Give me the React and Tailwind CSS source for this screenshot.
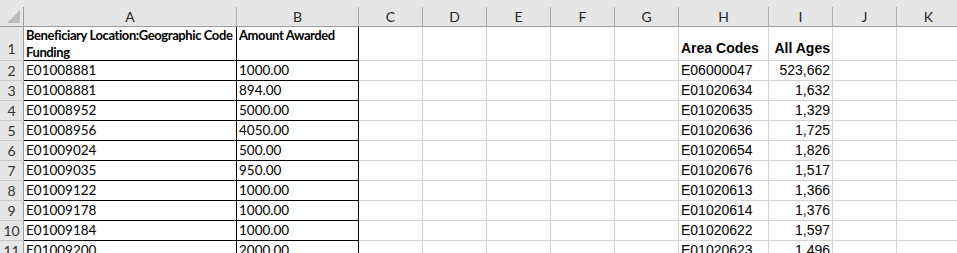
import React from "react";

const cols = ["A", "B", "C", "D", "E", "F", "G", "H", "I", "J", "K"];
const widths = ["w-[213px]", "w-[122px]", "w-[64px]", "w-[64px]", "w-[64px]", "w-[64px]", "w-[64px]", "w-[90px]", "w-[64px]", "w-[64px]", "w-[64px]"];

const rows = [
    ["E01008881", "1000.00", "E06000047", "523,662"],
    ["E01008881", "894.00", "E01020634", "1,632"],
    ["E01008952", "5000.00", "E01020635", "1,329"],
    ["E01008956", "4050.00", "E01020636", "1,725"],
    ["E01009024", "500.00", "E01020654", "1,826"],
    ["E01009035", "950.00", "E01020676", "1,517"],
    ["E01009122", "1000.00", "E01020613", "1,366"],
    ["E01009178", "1000.00", "E01020614", "1,376"],
    ["E01009184", "1000.00", "E01020622", "1,597"],
    ["E01009200", "2000.00", "E01020623", "1,496"],
];

const calibri = "font-['Lato','Open_Sans',sans-serif]";
const arial = "font-['Liberation_Sans',Arial,sans-serif]";

function RowHead({ n, h, align = "items-center" }) {
    return (
        <div className={`w-[24px] ${h} shrink-0 flex ${align} justify-center bg-[#e6e6e6] border-r border-r-[#9b9b9b] border-b border-b-[#c8c8c8] text-[14px] text-[#333] ${calibri}`}>
            {n}
        </div>
    );
}

function Blank({ w, h }) {
    return <div className={`${w} ${h} shrink-0 border-r border-b border-[#d4d4d4]`} />;
}

export default function App() {
    return (
        <div className="w-[957px] h-[253px] overflow-hidden bg-white">
            {/* column headers */}
            <div className="flex h-[27px] bg-[#e6e6e6] border-b border-[#9b9b9b]">
                <div className="w-[24px] shrink-0 pt-[7px]">
                    <div className="h-[19px] border-r border-[#9b9b9b] flex items-end justify-end pr-[3px] pb-[3px]">
                        <svg width="13" height="13" viewBox="0 0 13 13">
                            <polygon points="13,0 13,13 0,13" fill="#bcbcbc" />
                        </svg>
                    </div>
                </div>
                {cols.map((c, i) => (
                    <div key={c} className={`${widths[i]} shrink-0 pt-[7px]`}>
                        <div className={`h-[19px] border-r border-[#ababab] flex items-center justify-center text-[14px] text-[#262626] ${calibri}`}>
                            {c}
                        </div>
                    </div>
                ))}
            </div>

            {/* row 1 */}
            <div className="flex">
                <RowHead n={1} h="h-[34px]" align="items-end pb-[1px]" />
                <div className={`w-[213px] h-[34px] shrink-0 border-r border-b border-black px-[2px] whitespace-nowrap overflow-hidden text-[13px] tracking-[-0.4px] leading-[17px] font-bold text-black ${calibri}`}>
                    Beneficiary Location:Geographic Code<br />Funding
                </div>
                <div className={`w-[122px] h-[34px] shrink-0 border-r border-b border-black px-[2px] whitespace-nowrap text-[13px] tracking-[-0.4px] leading-[17px] font-bold text-black ${calibri}`}>
                    Amount Awarded
                </div>
                {widths.slice(2, 7).map((w, i) => <Blank key={i} w={w} h="h-[34px]" />)}
                <div className={`w-[90px] h-[34px] shrink-0 border-r border-b border-[#d4d4d4] flex items-end px-[2px] pb-[1px] text-[14px] font-bold text-black ${arial}`}>
                    Area Codes
                </div>
                <div className={`w-[64px] h-[34px] shrink-0 border-r border-b border-[#d4d4d4] flex items-end justify-end px-[2px] pb-[1px] text-[14px] font-bold text-black ${arial}`}>
                    All Ages
                </div>
                <Blank w="w-[64px]" h="h-[34px]" />
                <Blank w="w-[64px]" h="h-[34px]" />
            </div>

            {/* data rows */}
            {rows.map((r, idx) => (
                <div key={idx} className="flex">
                    <RowHead n={idx + 2} h="h-[20px]" />
                    <div className={`w-[213px] h-[20px] shrink-0 border-r border-b border-black flex items-center px-[2px] text-[13.5px] text-black ${calibri}`}>
                        {r[0]}
                    </div>
                    <div className={`w-[122px] h-[20px] shrink-0 border-r border-b border-black flex items-center px-[2px] text-[13.5px] text-black ${calibri}`}>
                        {r[1]}
                    </div>
                    {widths.slice(2, 7).map((w, i) => <Blank key={i} w={w} h="h-[20px]" />)}
                    <div className={`w-[90px] h-[20px] shrink-0 border-r border-b border-[#d4d4d4] flex items-center px-[2px] text-[14px] text-black ${arial}`}>
                        {r[2]}
                    </div>
                    <div className={`w-[64px] h-[20px] shrink-0 border-r border-b border-[#d4d4d4] flex items-center justify-end px-[2px] text-[14px] text-black ${arial}`}>
                        {r[3]}
                    </div>
                    <Blank w="w-[64px]" h="h-[20px]" />
                    <Blank w="w-[64px]" h="h-[20px]" />
                </div>
            ))}
        </div>
    );
}
